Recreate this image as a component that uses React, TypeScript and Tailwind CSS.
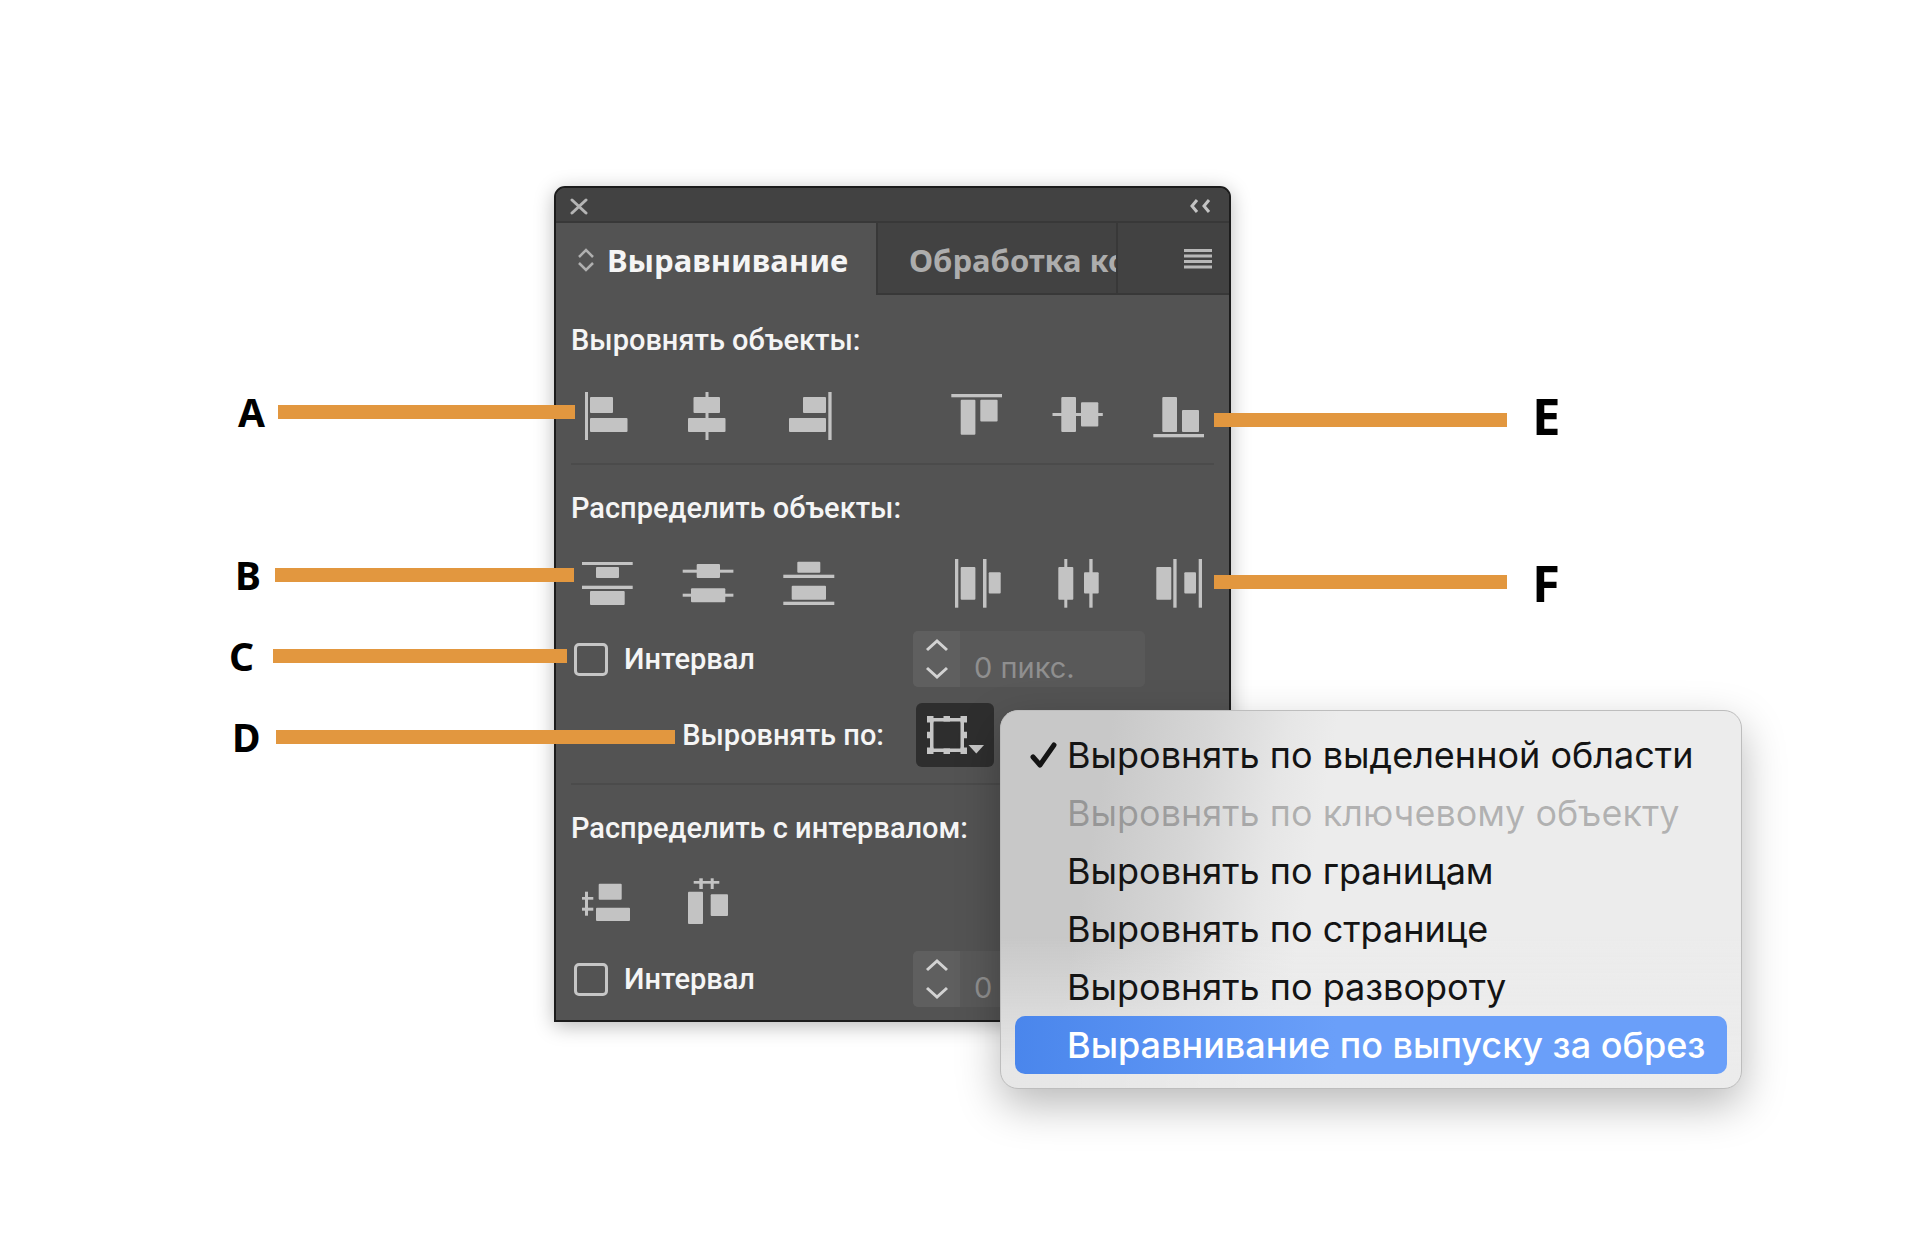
import React from "react";

type Box = [number, number, number, number];

const ICONS: Record<string, Box[]> = {
  alignLeft: [[4, 3, 3, 48], [9, 8, 23, 16], [9, 29, 37.5, 14]],
  alignCenterX: [[23.5, 3, 3, 48], [11.5, 8, 26.5, 16], [6, 29, 37.5, 14]],
  alignRight: [[20, 8, 23, 16], [6, 29, 37, 14], [45.3, 3, 3.3, 48]],
  alignTop: [[1.3, 5, 50.7, 3.3], [10.7, 10.7, 14.7, 35], [30.3, 10.7, 17.3, 21.7]],
  alignCenterY: [[1.5, 24, 50.3, 3], [10.3, 8, 14.7, 35], [30, 13.3, 17.3, 24.3]],
  alignBottom: [[1.3, 45, 50.7, 3.3], [10.3, 8, 14.7, 35], [30, 21, 17, 22]],
  distTop: [[1, 5, 50.7, 3], [1, 28.7, 50.7, 3.3], [15, 10, 23, 11], [9, 34, 34.7, 14]],
  distCenterY: [[0.7, 12.7, 50.7, 3], [14.7, 7, 23.3, 14], [0.7, 36.7, 50.7, 3], [9, 31.3, 34.3, 14]],
  distBottom: [[14.3, 4.7, 23, 11], [0.3, 17.7, 51, 3.3], [8.7, 28.7, 34.3, 14], [0.3, 44.7, 51, 3.3]],
  distLeft: [[5, 2, 3.3, 48.7], [10.7, 10, 14.7, 32.7], [33, 2, 3.5, 48.7], [38.7, 15.3, 12, 21.3]],
  distCenterX: [[7.3, 10, 15, 32.7], [13.3, 2, 3, 48.7], [33, 15.3, 14.7, 21.3], [38.3, 2, 3.3, 48.7]],
  distRight: [[4.3, 10, 15, 32.7], [21.3, 2, 3.3, 48.7], [32.3, 15.3, 11.7, 21.3], [46.7, 2, 3.3, 48.7]],
  spaceY: [[4, 14.7, 3, 24], [1, 20, 11.3, 2.7], [1, 30.7, 11.3, 3], [17.7, 6.7, 23, 16], [15, 30.7, 34, 13.3]],
  spaceX: [[11.7, 4, 25.6, 2.7], [17.3, 1.3, 3.5, 10.7], [28.7, 1.3, 3, 10.7], [6, 14.7, 15, 32.3], [28.7, 17.3, 17.3, 21.7]],
};

function IconButton({ icon, label }: { icon: string; label: string }) {
  return (
    <button type="button" aria-label={label} className="size-[52px]">
      <svg viewBox="0 0 52 52" className="size-[52px] fill-[#c3c3c3]">
        {ICONS[icon].map(([x, y, w, h], i) => (
          <rect key={i} x={x} y={y} width={w} height={h} rx={w > 5 && h > 5 ? 1 : 0} />
        ))}
      </svg>
    </button>
  );
}

function IconGroup({ items }: { items: [string, string][] }) {
  return (
    <div className="flex gap-[49px]">
      {items.map(([icon, label]) => (
        <IconButton key={icon} icon={icon} label={label} />
      ))}
    </div>
  );
}

function Heading({ children }: { children: React.ReactNode }) {
  return <h2 className="mt-[22px] text-[29px] leading-[42px] font-medium whitespace-nowrap">{children}</h2>;
}

function Divider() {
  return <hr className="h-[2px] border-0 bg-[#4b4b4b]" />;
}

function SpacingRow({ id }: { id: string }) {
  return (
    <div className="mt-[22px] grid grid-cols-[342fr_301fr]">
      <label htmlFor={id} className="flex items-center gap-4 pl-[3px] text-[29px] leading-[42px] font-medium">
        <input
          id={id}
          type="checkbox"
          className="h-[33px] w-[34px] appearance-none rounded-[5px] border-[3px] border-[#c6c6c6]"
        />
        Интервал
      </label>
      <div className="mr-[69px] flex h-14 overflow-hidden rounded-[5px] bg-[#595959]">
        <div className="flex w-[47px] shrink-0 flex-col bg-[#5f5f5f]">
          <button type="button" aria-label="Увеличить" className="flex h-7 items-center justify-center">
            <svg width="24" height="14" viewBox="0 0 24 14" fill="none" stroke="#d2d2d2" strokeWidth="3">
              <path d="M2 12 12 3 22 12" />
            </svg>
          </button>
          <button type="button" aria-label="Уменьшить" className="flex h-7 items-center justify-center">
            <svg width="24" height="14" viewBox="0 0 24 14" fill="none" stroke="#d2d2d2" strokeWidth="3">
              <path d="M2 2 12 11 22 2" />
            </svg>
          </button>
        </div>
        <input
          type="text"
          aria-label="Значение интервала"
          disabled
          defaultValue="0 пикс."
          className="w-full min-w-0 bg-transparent pt-[18px] pl-[14px] font-['Inter',sans-serif] text-[29px] leading-[38px] text-[#8f8f8f]"
        />
      </div>
    </div>
  );
}

const MENU: { text: string; state?: "checked" | "disabled" | "active" }[] = [
  { text: "Выровнять по выделенной области", state: "checked" },
  { text: "Выровнять по ключевому объекту", state: "disabled" },
  { text: "Выровнять по границам" },
  { text: "Выровнять по странице" },
  { text: "Выровнять по развороту" },
  { text: "Выравнивание по выпуску за обрез", state: "active" },
];

function AlignMenu() {
  return (
    <div
      role="menu"
      className="absolute top-[7px] left-full z-10 ml-[6px] w-max rounded-[18px] border border-[#bdbdbd] bg-[#ececec] bg-[linear-gradient(to_bottom,rgba(236,236,236,0)_60%,rgba(236,236,236,0.85)_94%),linear-gradient(100deg,#c8c8c8_14%,#d6d6d6_26%,#e6e6e6_36%,#ececec_42%)] px-[14px] pt-[15px] pb-[14px] font-['Inter',sans-serif] shadow-[0_16px_44px_rgba(0,0,0,0.28)]"
    >
      {MENU.map(({ text, state }) => (
        <button
          key={text}
          type="button"
          role="menuitem"
          disabled={state === "disabled"}
          className={
            "flex h-[58px] w-full items-center rounded-[10px] pr-[22px] text-left text-[36px] leading-[58px] whitespace-nowrap " +
            (state === "active"
              ? "bg-linear-to-r from-[#4a86ec] to-[#6a9ff9] to-45% font-medium text-white"
              : state === "disabled"
                ? "text-black/25"
                : "text-[#141414]")
          }
        >
          <span className="flex w-[52px] shrink-0 pl-[15px]">
            {state === "checked" && (
              <svg width="28" height="28" viewBox="0 0 28 28" fill="none" stroke="#141414" strokeWidth="5" strokeLinecap="round" strokeLinejoin="round">
                <path d="M3 16 10 24 24 4" />
              </svg>
            )}
          </span>
          {text}
        </button>
      ))}
    </div>
  );
}

function AlignToButton() {
  return (
    <div className="relative ml-[3px] w-[78px]">
      <button type="button" aria-label="Выровнять по" aria-haspopup="menu" className="block h-16 w-[78px] rounded-md bg-[#2e2e2e]">
        <svg width="78" height="64" viewBox="0 0 78 64" fill="#c6c6c6">
          <path d="M14 15H48V49H14ZM17.500 18.500V45.500H44.500V18.500Z" fillRule="evenodd" />
          <path d="M11 13h6.500v6.500H11zM44.500 13H51v6.500h-6.500zM11 44.500h6.500V51H11zM44.500 44.500H51V51h-6.500zM27.500 13H34v5.500h-6.500zM27.500 45.500H34V51h-6.500zM11 28.700h5.500v6.500H11zM45.500 28.700H51v6.500h-5.500z" />
          <path d="M52.500 42h15.500l-7.700 8.500z" />
        </svg>
      </button>
      <AlignMenu />
    </div>
  );
}

function LeftCallout({
  letter,
  className,
  letterClass,
  lineClass,
}: {
  letter: string;
  className: string;
  letterClass: string;
  lineClass: string;
}) {
  return (
    <div className={"absolute z-20 flex h-10 items-center " + className}>
      <span className={"text-[39px] leading-10 font-bold text-black " + letterClass}>{letter}</span>
      <span className={"h-[14px] bg-[#e2973f] " + lineClass} />
    </div>
  );
}

function RightCallout({ letter, className }: { letter: string; className: string }) {
  return (
    <div className={"absolute z-20 flex h-[60px] gap-[25px] " + className}>
      <span className="h-[14px] w-[293px] self-center bg-[#e2973f]" />
      <span className="text-[51px] leading-[51px] font-bold text-black">{letter}</span>
    </div>
  );
}

export default function App() {
  return (
    <main className="grid min-h-screen grid-cols-[554fr_677fr_689fr] items-start overflow-hidden bg-white pt-[186px] font-['Noto_Sans',sans-serif]">
      <div className="relative col-start-2 min-w-[676px]">
        <section className="rounded-t-[11px] border-2 border-[#1c1c1c] bg-[#535353] pb-[13px] font-['Roboto',sans-serif] text-[#f5f5f5] shadow-[0_4px_20px_rgba(0,0,0,0.28)]">
          <div className="flex h-[35px] items-center justify-between rounded-t-[9px] border-b-2 border-[#383838] bg-[#424242] pt-[3px] pr-[18px] pl-[14px]">
            <button type="button" aria-label="Закрыть">
              <svg width="18" height="17" viewBox="0 0 18 17" fill="none" stroke="#b4b4b4" strokeWidth="3" strokeLinecap="round">
                <path d="M2 2 16 15M16 2 2 15" />
              </svg>
            </button>
            <button type="button" aria-label="Свернуть">
              <svg width="22" height="14" viewBox="0 0 22 14" fill="none" stroke="#c4c4c4" strokeWidth="3">
                <path d="M8 1 3 7 8 13M20 1 15 7 20 13" />
              </svg>
            </button>
          </div>
          <div className="grid h-[72px] grid-cols-[320fr_242fr_111fr] bg-[#424242] font-['Noto_Sans',sans-serif]" role="tablist">
            <button
              type="button"
              role="tab"
              aria-selected="true"
              className="flex min-w-0 items-center gap-[13px] bg-[#535353] pt-[2px] pl-[22px] text-[31px] font-bold"
            >
              <svg width="16" height="24" viewBox="0 0 16 24" fill="none" stroke="#b0b0b0" strokeWidth="2.500" className="shrink-0">
                <path d="M1 9 8 2 15 9M1 15 8 22 15 15" />
              </svg>
              Выравнивание
            </button>
            <button
              type="button"
              role="tab"
              aria-selected="false"
              className="flex min-w-0 items-center overflow-hidden border-x-2 border-b-2 border-[#383838] pt-1 pl-[31px] text-[31px] font-bold whitespace-nowrap text-[#adadad]"
            >
              Обработка ко
            </button>
            <div className="flex items-center justify-end border-b-2 border-[#383838] pt-[2px] pr-[17px]">
              <button type="button" aria-label="Меню панели">
                <svg width="28" height="20" viewBox="0 0 28 20" fill="#b8b8b8">
                  <path d="M0 0h28v3H0zM0 5.500h28v3H0zM0 11h28v3H0zM0 16.500h28v3H0z" />
                </svg>
              </button>
            </div>
          </div>

          <div className="px-[15px] pt-[2px]">
            <Heading>Выровнять объекты:</Heading>
            <div className="mt-7 flex justify-between px-[10px]">
              <IconGroup
                items={[
                  ["alignLeft", "По левому краю"],
                  ["alignCenterX", "По центру по горизонтали"],
                  ["alignRight", "По правому краю"],
                ]}
              />
              <IconGroup
                items={[
                  ["alignTop", "По верхнему краю"],
                  ["alignCenterY", "По центру по вертикали"],
                  ["alignBottom", "По нижнему краю"],
                ]}
              />
            </div>
            <div className="mt-[22px]">
              <Divider />
            </div>

            <Heading>Распределить объекты:</Heading>
            <div className="mt-7 flex justify-between px-[10px]">
              <IconGroup
                items={[
                  ["distTop", "По верхним краям"],
                  ["distCenterY", "По центрам по вертикали"],
                  ["distBottom", "По нижним краям"],
                ]}
              />
              <IconGroup
                items={[
                  ["distLeft", "По левым краям"],
                  ["distCenterX", "По центрам по горизонтали"],
                  ["distRight", "По правым краям"],
                ]}
              />
            </div>
            <SpacingRow id="spacing-objects" />
            <div className="mt-4 grid grid-cols-[342fr_301fr] items-center">
              <p className="pr-[29px] text-right text-[29px] leading-[42px] font-medium whitespace-nowrap">Выровнять по:</p>
              <AlignToButton />
            </div>
            <div className="mt-4">
              <Divider />
            </div>

            <Heading>Распределить с интервалом:</Heading>
            <div className="mt-7 px-[10px]">
              <IconGroup
                items={[
                  ["spaceY", "Интервал по вертикали"],
                  ["spaceX", "Интервал по горизонтали"],
                ]}
              />
            </div>
            <SpacingRow id="spacing-gap" />
          </div>
        </section>

        <LeftCallout letter="A" className="top-[206px] right-[calc(100%-21px)]" letterClass="w-10" lineClass="w-[297px]" />
        <LeftCallout letter="B" className="top-[369px] right-[calc(100%-20px)]" letterClass="w-10" lineClass="w-[299px]" />
        <LeftCallout letter="C" className="top-[450px] right-[calc(100%-13px)]" letterClass="w-11" lineClass="w-[294px]" />
        <LeftCallout letter="D" className="top-[531px] right-[calc(100%-121px)]" letterClass="w-11" lineClass="w-[399px]" />
        <RightCallout letter="E" className="top-[204px] left-[calc(100%-17px)] items-start" />
        <RightCallout letter="F" className="top-[366px] left-[calc(100%-17px)] items-center" />
      </div>
    </main>
  );
}
